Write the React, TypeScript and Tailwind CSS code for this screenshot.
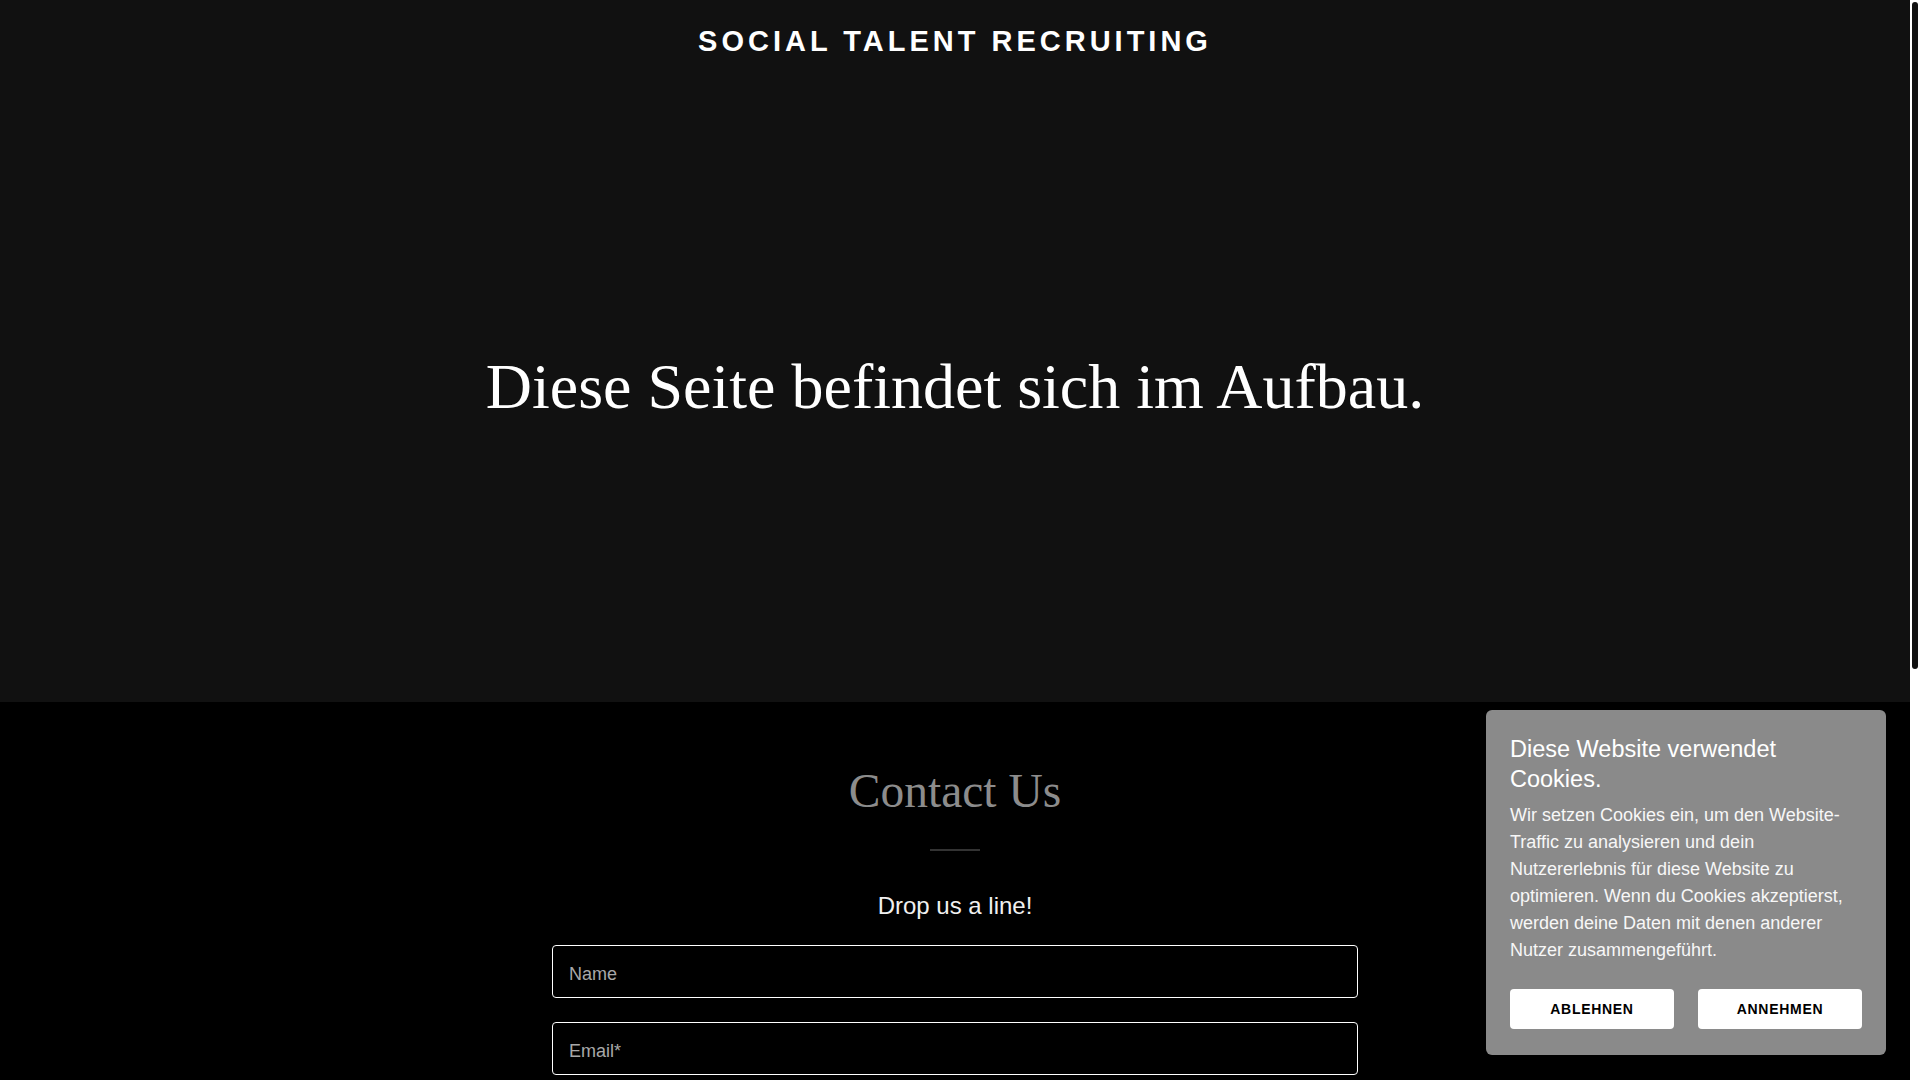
import React from 'react';

const sans = { fontFamily: '"Liberation Sans", Arial, sans-serif' };

const CookieBanner: React.FC = () => (
  <div className="fixed bottom-[25px] right-[34px] w-[400px] rounded-[6px] bg-[#8a8a8a] px-6 pt-[25px] pb-[26px] text-white font-['Liberation_Sans',Arial,sans-serif]">
    <h2 className="text-[23.5px] leading-[1.25] font-normal text-white">
      Diese Website verwendet Cookies.
    </h2>
    <p className="mt-2 text-[18px] leading-[1.5] text-[#f7f7f7]">
      Wir setzen Cookies ein, um den Website-Traffic zu analysieren und dein Nutzererlebnis für
      diese Website zu optimieren. Wenn du Cookies akzeptierst, werden deine Daten mit denen
      anderer Nutzer zusammengeführt.
    </p>
    <div className="mt-[25px] flex gap-6">
      <button className="h-10 flex-1 rounded-[4px] bg-white text-[14px] font-bold uppercase tracking-[0.7px] text-black">
        Ablehnen
      </button>
      <button className="h-10 flex-1 rounded-[4px] bg-white text-[14px] font-bold uppercase tracking-[0.7px] text-black">
        Annehmen
      </button>
    </div>
  </div>
);

const Field: React.FC<{ placeholder: string }> = ({ placeholder }) => (
  <input
    type="text"
    placeholder={placeholder}
    className="block h-[53px] w-full rounded-[4px] border border-white bg-black px-4 pt-[5px] text-[18px] text-white placeholder:text-[#a8a8a8] outline-none font-['Liberation_Sans',Arial,sans-serif]"
  />
);

// headless browser hides native scrollbars, so the page's styled one is drawn here
const ScrollBar: React.FC = () => (
  <div className="w-[10px] shrink-0 bg-white p-[2px]">
    <div className="h-[667px] w-full rounded-full bg-[#111111]" />
  </div>
);

export default function App() {
  return (
    <div className="flex h-screen overflow-hidden bg-black">
      <main className="min-w-0 flex-1">
        {/* hero */}
        <section className="flex h-[702px] flex-col bg-[#111111]">
          <header className="pt-[24px] pb-[14px] text-center">
            <h1
              className="text-[29px] leading-[1.2] font-bold uppercase tracking-[4px] text-white"
              style={sans}
            >
              Social Talent Recruiting
            </h1>
          </header>
          <div className="flex flex-1 items-center justify-center">
            <h2 className="text-[64px] leading-[1.2] font-normal text-white font-['Liberation_Serif','Times_New_Roman',serif]">
              Diese Seite befindet sich im Aufbau.
            </h2>
          </div>
        </section>

        {/* contact */}
        <section className="bg-black pt-[60px]">
          <h2 className="text-center text-[47.5px] leading-[1.25] font-normal text-[#8c8c8c] font-['Liberation_Serif','Times_New_Roman',serif]">
            Contact Us
          </h2>
          <div className="mx-auto mt-[28px] h-[2px] w-[50px] bg-[#333333]" />
          <p className="mt-10 text-center text-[24px] leading-[1.25] text-[#f0f0f0]" style={sans}>
            Drop us a line!
          </p>
          <form className="mx-auto mt-6 flex w-[806px] flex-col gap-6">
            <Field placeholder="Name" />
            <Field placeholder="Email*" />
          </form>
        </section>
      </main>
      <ScrollBar />
      <CookieBanner />
    </div>
  );
}
